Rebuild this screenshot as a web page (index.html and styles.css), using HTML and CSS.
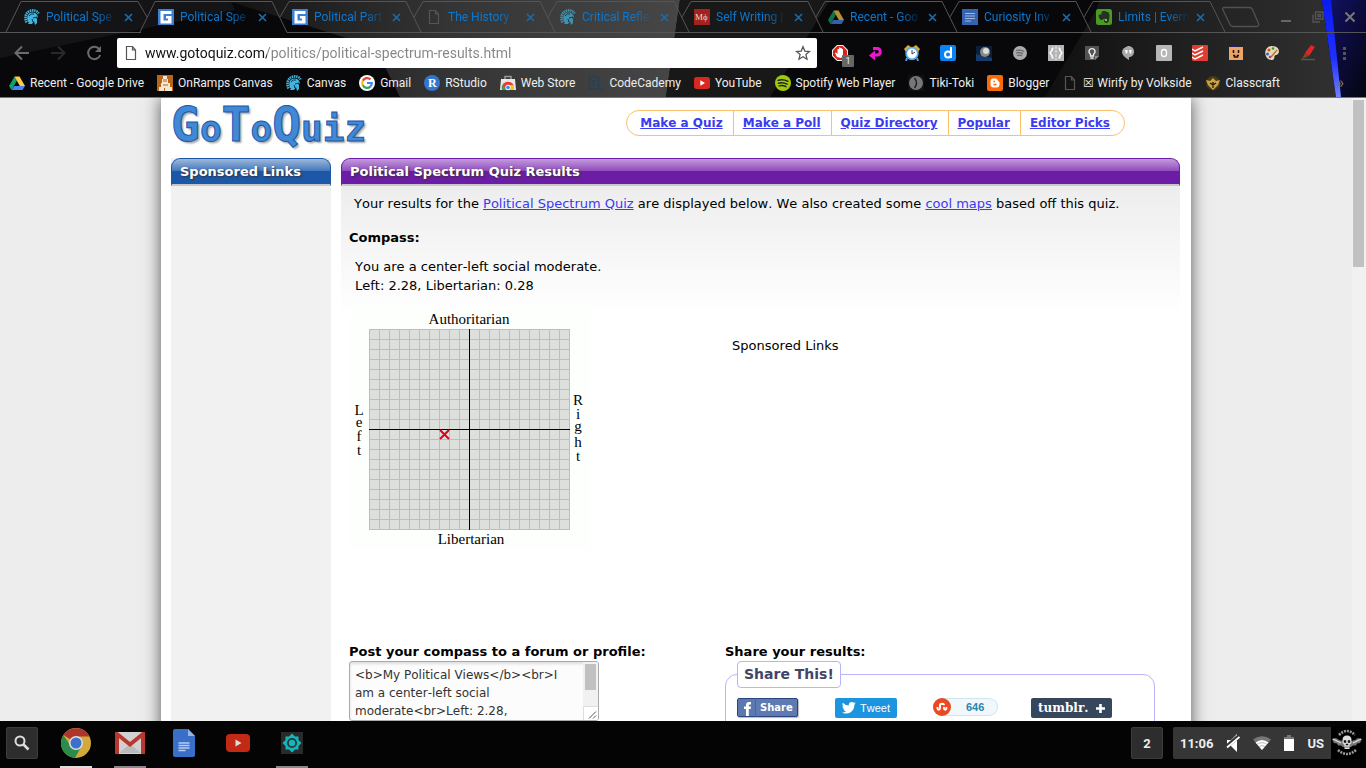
FILE: index.html
```html
<!DOCTYPE html>
<html lang="en">
<head>
<meta charset="utf-8">
<title>Political Spectrum Quiz Results</title>
<link rel="stylesheet" href="styles.css">
</head>
<body>
<svg class="defs" aria-hidden="true">
  <defs>
    <symbol id="spartan" viewBox="0 0 16 16"><path d="M2.500 13.500C.5 9 1.500 3.500 6 2c4-1.500 7.500 0 8.500 2.500" fill="none" stroke="#3fb5e0" stroke-width="2.600" stroke-dasharray="1.500 .7"/><path d="M4 13C2 8 4 3.500 8.500 3.500c3 0 5 1.800 5.500 5l-2.500-.5L13 10v4l-2 2-1-4-2 3H4l1-2z" fill="#3fb5e0"/><path d="M9 9l4-1M8 10l1 3M5 7q2-3 5-2" fill="none" stroke="#123" stroke-width=".9"/></symbol>
    <symbol id="gq" viewBox="0 0 16 16"><path d="M0 0h16v16H0z" fill="#3f7fd0"/><path d="M2.500 2h11v3H5.500v6.500h4.500V9.500H8V7h5.500v7.500h-11z" fill="#fff"/></symbol>
    <symbol id="file" viewBox="0 0 16 16"><path d="M3.500 1.500h6l3 3.500v9.500h-9zM9.500 1.500V5h3" fill="none" stroke="currentColor" stroke-width="1.200"/></symbol>
    <symbol id="mphi" viewBox="0 0 16 16"><path d="M0 0h16v16H0z" fill="#a3221c"/><text x="1" y="11" font-family="Liberation Serif" font-size="9" fill="#ddd">Mϕ</text></symbol>
    <symbol id="drive" viewBox="0 0 16 16"><path d="M5.500 1.500L0 11l2.500 4L8 5.600z" fill="#16a163"/><path d="M5.500 1.500h5L16 11h-5.200z" fill="#fc4"/><path d="M5.200 11H16l-2.500 4h-11z" fill="#4285f4"/></symbol>
    <symbol id="gdoc" viewBox="0 0 16 16"><path d="M0 0h16v16H0z" fill="#3563b0"/><path d="M3 4.500h10M3 7h10M3 9.500h10M3 12h6" stroke="#9db9e8"/></symbol>
    <symbol id="evernote" viewBox="0 0 16 16"><rect width="16" height="16" rx="2.500" fill="#4c9a26"/><path d="M3 6h3V3q2-1 4 0 3 0 3 3 0 7-2 7.500-3 .5-2.500-2.500h2M8 9q-1 2-3 1.500Q3 10 3 6" fill="#273024" stroke="#273024"/><path d="M9 12h2v-2H9z" fill="#7fbf55"/></symbol>
    <symbol id="youtube" viewBox="0 0 24 18"><rect width="24" height="18" rx="4" fill="#d9281e"/><path d="M9.500 5v8l7-4z" fill="#fff"/></symbol>
    <symbol id="spotify" viewBox="0 0 16 16"><circle cx="8" cy="8" r="8" fill="currentColor"/><path d="M3 5.300q5-1.500 10 1M3.500 8.200q4.500-1.200 8.600 1M4 10.900q4-1 7 .8" fill="none" stroke="#222" stroke-width="1.400" stroke-linecap="round"/></symbol>
    <symbol id="cross" viewBox="0 0 9 9"><path d="M1 1l7 7M8 1L1 8" stroke="#1f6a9f" stroke-width="1.700"/></symbol>
  </defs>
</svg>

<header class="browser">
  <svg class="theme" viewBox="0 0 1366 97" preserveAspectRatio="none" aria-hidden="true">
    <defs>
      <linearGradient id="mid"><stop offset="0" stop-color="#121213"/><stop offset=".5" stop-color="#353535"/><stop offset="1" stop-color="#464646"/></linearGradient>
      <linearGradient id="east"><stop offset="0" stop-color="#101010"/><stop offset="1" stop-color="#303030"/></linearGradient>
      <linearGradient id="navy" x2="1" y2="1"><stop offset="0" stop-color="#12126a"/><stop offset="1" stop-color="#05050f"/></linearGradient>
      <linearGradient id="beam" x2="0" y2="1"><stop offset="0" stop-color="#0a1cf0"/><stop offset=".6" stop-color="#1e2fff"/><stop offset="1" stop-color="#7080ff"/></linearGradient>
    </defs>
    <path d="M0 0h1366v97H0z" fill="#08080a"/>
    <path d="M0 0h230l5 10L0 58z" fill="#141416"/>
    <path d="M225 0h455l-14 97H400l-25-50z" fill="url(#mid)"/>
    <path d="M680 0h150l-60 97H666z" fill="#181818"/>
    <path d="M1100 0h222l14 97h-291l50-85z" fill="url(#east)"/>
    <path d="M1322 0h44v97h-30z" fill="url(#navy)"/>
    <path d="M1322 0h9l10 97h-5z" fill="url(#beam)"/>
  </svg>

  <div class="tabrow">
    <ul class="tabs">
      <li class="tab"><svg class="edge" viewBox="0 0 150 33"><path d="M-6 32.500H135M0 32L15 1.500H132L141 17"/></svg><svg class="fav"><use href="#spartan"/></svg><span class="title">Political Spe</span><button class="close" aria-label="Close tab"><svg><use href="#cross"/></svg></button></li>
      <li class="tab active"><svg class="edge" viewBox="0 0 150 33"><path d="M0 32L15 1.500H132L147 32.500"/></svg><svg class="fav"><use href="#gq"/></svg><span class="title">Political Spe</span><button class="close" aria-label="Close tab"><svg><use href="#cross"/></svg></button></li>
      <li class="tab"><svg class="edge" viewBox="0 0 150 33"><path d="M13 32.500H150M6 17L15 1.500H132L147 32"/></svg><svg class="fav"><use href="#gq"/></svg><span class="title">Political Part</span><button class="close" aria-label="Close tab"><svg><use href="#cross"/></svg></button></li>
      <li class="tab"><svg class="edge" viewBox="0 0 150 33"><path d="M0 32.500H150M6 17L15 1.500H132L147 32"/></svg><svg class="fav faint"><use href="#file"/></svg><span class="title">The History</span><button class="close" aria-label="Close tab"><svg><use href="#cross"/></svg></button></li>
      <li class="tab"><svg class="edge" viewBox="0 0 150 33"><path d="M0 32.500H150M6 17L15 1.500H132L147 32"/></svg><svg class="fav dim"><use href="#spartan"/></svg><span class="title">Critical Refle</span><button class="close" aria-label="Close tab"><svg><use href="#cross"/></svg></button></li>
      <li class="tab"><svg class="edge" viewBox="0 0 150 33"><path d="M0 32.500H150M6 17L15 1.500H132L147 32"/></svg><svg class="fav"><use href="#mphi"/></svg><span class="title">Self Writing |</span><button class="close" aria-label="Close tab"><svg><use href="#cross"/></svg></button></li>
      <li class="tab"><svg class="edge" viewBox="0 0 150 33"><path d="M0 32.500H150M6 17L15 1.500H132L147 32"/></svg><svg class="fav dim"><use href="#drive"/></svg><span class="title">Recent - Goo</span><button class="close" aria-label="Close tab"><svg><use href="#cross"/></svg></button></li>
      <li class="tab"><svg class="edge" viewBox="0 0 150 33"><path d="M0 32.500H150M6 17L15 1.500H132L147 32"/></svg><svg class="fav"><use href="#gdoc"/></svg><span class="title">Curiosity Inv</span><button class="close" aria-label="Close tab"><svg><use href="#cross"/></svg></button></li>
      <li class="tab"><svg class="edge" viewBox="0 0 150 33"><path d="M0 32.500H288M6 17L15 1.500H132L147 32"/></svg><svg class="fav"><use href="#evernote"/></svg><span class="title">Limits | Evern</span><button class="close" aria-label="Close tab"><svg><use href="#cross"/></svg></button></li>
    </ul>
    <button class="newtab" aria-label="New tab"><svg width="38" height="22" viewBox="0 0 38 22"><path d="M1.500 1.500h26q2 0 3 2l6 14q1 3-2 3H11q-2 0-3-2L1 4Q0 2 1.500 1.500z" fill="none" stroke="#515151" stroke-width="1.300"/></svg></button>
    <div class="window-buttons">
      <button aria-label="Minimize"><svg width="12" height="12" viewBox="0 0 12 12"><path d="M1 10h10" stroke="#666" stroke-width="2"/></svg></button>
      <button aria-label="Restore"><svg width="12" height="12" viewBox="0 0 12 12"><path d="M3.500 1h7.500v7H3.500zM6 3.500h2.500v2H6zM1 3.500V11h7" fill="none" stroke="#555" stroke-width="1.300"/></svg></button>
      <button aria-label="Close window"><svg width="12" height="12" viewBox="0 0 12 12"><path d="M1.500 1.500l9 9m0-9l-9 9" stroke="#777" stroke-width="2"/></svg></button>
    </div>
  </div>

  <div class="toolbar">
    <div class="history">
      <button aria-label="Back"><svg width="16" height="16" viewBox="0 0 16 16"><path d="M15 8H2M8 1.500L1.500 8 8 14.500" fill="none" stroke="#6c6c6c" stroke-width="2"/></svg></button>
      <button aria-label="Forward"><svg width="16" height="16" viewBox="0 0 16 16"><path d="M1 8h13M8 1.500L14.500 8 8 14.500" fill="none" stroke="#29292b" stroke-width="2"/></svg></button>
      <button aria-label="Reload"><svg width="16" height="16" viewBox="0 0 16 16"><path d="M13.500 4.500A6.200 6.200 0 1 0 14.200 10" fill="none" stroke="#6c6c6c" stroke-width="2"/><path d="M15 1v6H9z" fill="#6c6c6c"/></svg></button>
    </div>
    <form class="omnibox">
      <svg class="fav sheet"><use href="#file"/></svg>
      <input class="url" type="text" aria-label="Address" value="www.gotoquiz.com/politics/political-spectrum-results.html">
      <button type="button" aria-label="Bookmark"><svg width="16" height="16" viewBox="0 0 16 16"><path d="M8 1.800l1.800 4.300 4.700.4-3.600 3.100 1.100 4.600L8 11.700l-4 2.500 1.100-4.600L1.500 6.500l4.700-.4z" fill="none" stroke="#555" stroke-width="1.300"/></svg></button>
    </form>
    <div class="extensions">
      <button aria-label="AdBlock, 1 blocked"><svg viewBox="0 0 16 16"><path d="M5 0h6l5 5v6l-5 5H5l-5-5V5z" fill="#eee"/><path d="M5.400 1h5.200L15 5.400v5.200L10.600 15H5.400L1 10.600V5.400z" fill="#d8221c"/><path d="M5 12L3 8l1-.5L5.500 9V4H7V2.500h1.300V3h1.400v1H11v5q0 3-2 4z" fill="#fff"/></svg><span class="badge">1</span></button>
      <button aria-label="Return"><svg viewBox="0 0 16 16"><path d="M5 3.500h4.500a3.300 3.300 0 0 1 0 6.500H5" fill="none" stroke="#f016d0" stroke-width="3"/><path d="M1 10.500l6-5v10z" fill="#f016d0"/></svg></button>
      <button aria-label="Alarm"><svg viewBox="0 0 16 16"><path d="M0 4l4-4 3 2-5 5zM16 4l-4-4-3 2 5 5z" fill="#e2a936"/><path d="M3 13l-1 3M13 13l1 3" stroke="#5a9bd6" stroke-width="2"/><circle cx="8" cy="8.500" r="5.800" fill="#fff" stroke="#5faae4" stroke-width="1.800"/><path d="M8 5v4l3-2" fill="none" stroke="#246"/></svg></button>
      <button aria-label="Diigo"><svg viewBox="0 0 16 16"><rect width="16" height="16" rx="2" fill="#0a84f5"/><path d="M11 2v11" stroke="#fff" stroke-width="2"/><circle cx="8" cy="9.500" r="3" fill="none" stroke="#fff" stroke-width="2"/></svg></button>
      <button aria-label="Moon"><svg viewBox="0 0 16 16"><path d="M0 1h16v15H0z" fill="#0b2038"/><path d="M0 9q8 2 16 4v3H0z" fill="#173c6a"/><circle cx="9" cy="7" r="5" fill="#888"/><circle cx="10" cy="6" r="3" fill="#ddd"/></svg></button>
      <button aria-label="Spotify"><svg viewBox="0 0 16 16"><circle cx="8" cy="8" r="7" fill="#aaa"/><path d="M4 5.500q4-1 8 1M4 8q4-1 7 1M5 10.500q3-1 5 .5" fill="none" stroke="#666" stroke-width="1.200"/></svg></button>
      <button aria-label="Code"><svg viewBox="0 0 16 16"><path d="M0 0h16v16H0z" fill="#b4b4b4"/><path d="M5.500 3Q4 3 4 5.500L2 8l2 2.500Q4 13 5.500 13M10.500 3Q12 3 12 5.500L14 8l-2 2.500q0 2.500-1.500 2.500" fill="none" stroke="#fff" stroke-width="1.500"/><path d="M8 1v14" stroke="#eee" stroke-dasharray="3 1"/></svg></button>
      <button aria-label="Keep"><svg viewBox="0 0 16 16"><path d="M1 1h14v10l-4 4H1z" fill="#535353"/><path d="M11 15v-4h4z" fill="#888"/><path d="M6.500 9.500Q4 7 5.500 4.800q2.500-2.400 5 0Q12 7 9.500 9.500v1.500h-3zM6.500 13h3" fill="none" stroke="#eee" stroke-width="1.300"/></svg></button>
      <button aria-label="Hangouts"><svg viewBox="0 0 16 16"><path d="M8 1c8 0 8 11 1 11v3Q2 11 2 7t6-6z" fill="#a9a9a9"/><path d="M5 5h2.500v2.500L6 9M9 5h2.500v2.500L10 9" fill="#fff"/></svg></button>
      <button aria-label="Office"><svg viewBox="0 0 16 16"><rect width="16" height="16" rx="1" fill="#b7b7b7"/><rect x="5.500" y="4.500" width="5" height="7" rx="2.500" fill="none" stroke="#fff" stroke-width="1.300"/></svg></button>
      <button aria-label="Todoist"><svg viewBox="0 0 16 16"><rect width="16" height="16" rx="1" fill="#df3d30"/><path d="M0 4l3 2 8-4M0 8l3 2 8-4M0 12l3 2 8-4" fill="none" stroke="#fff" stroke-width="1.500"/></svg></button>
      <button aria-label="Face"><svg viewBox="0 0 16 16"><path d="M1 2h14v13H1z" fill="#eca469"/><path d="M4 1h5v1H4z" fill="#24246d"/><path d="M5.500 5v3M10.500 5v3M5 10.500h1.500v1.500h3v-1.500H11" fill="none" stroke="#211" stroke-width="1.500"/></svg></button>
      <button aria-label="Palette"><svg viewBox="0 0 16 16"><path d="M8 1c9 0 8 9 4 9-3 0 0 5-4 5C-1 15-1 1 8 1z" fill="#e6d9bb"/><circle cx="5" cy="5" r="1.500" fill="#cc5127"/><circle cx="9" cy="3.500" r="1.300" fill="#4c8b32"/><circle cx="3.500" cy="9" r="1.500" fill="#3267c5"/><circle cx="6" cy="12" r="1.300" fill="#ad3b88"/><path d="M7 12L13 5" stroke="#b4702c" stroke-width="1.300"/></svg></button>
      <button aria-label="Highlighter"><svg viewBox="0 0 16 16"><path d="M1 14.500h14" stroke="#555" stroke-width="1.500"/><path d="M5 8l6-8 4 2-6 9z" fill="#df2525"/><path d="M5 8l4 3-5 2-2 1z" fill="#842"/></svg></button>
      <button aria-label="Menu"><svg viewBox="0 0 16 16"><path d="M7 2h3v3H7zM7 7h3v3H7zM7 12h3v3H7z" fill="#555"/></svg></button>
    </div>
  </div>

  <nav class="bookmarks" aria-label="Bookmarks">
    <a href="#"><svg class="fav"><use href="#drive"/></svg>Recent - Google Drive</a>
    <a href="#"><svg class="fav" viewBox="0 0 16 16"><path d="M0 0h16v16H0z" fill="#b8651b"/><path d="M6 1h4v3h1v4h2v4h2v4H2v-4h2V8h1V4h1z" fill="#f3e7d3"/><path d="M7 4v3M9 4v3M6 10h5M7.500 13v3" stroke="#b8651b"/></svg>OnRamps Canvas</a>
    <a href="#"><svg class="fav"><use href="#spartan"/></svg>Canvas</a>
    <a href="#"><svg class="fav" viewBox="0 0 16 16"><circle cx="8" cy="8" r="8" fill="#fff"/><g fill="none" stroke-width="2.200"><path d="M11.500 4.500A4.800 4.800 0 0 0 3.800 5.700" stroke="#ea4335"/><path d="M3.800 5.700a4.800 4.800 0 0 0 0 4.600" stroke="#fbbc05"/><path d="M3.800 10.300a4.800 4.800 0 0 0 7.500 1.300" stroke="#34a853"/><path d="M11.300 11.600A4.800 4.800 0 0 0 12.800 8H8" stroke="#4285f4"/></g></svg>Gmail</a>
    <a href="#"><svg class="fav" viewBox="0 0 16 16"><circle cx="8" cy="8" r="8" fill="#3376cf"/><text x="4" y="12" font-family="Liberation Serif" font-size="12" font-weight="700" fill="#fff">R</text></svg>RStudio</a>
    <a href="#"><svg class="fav" viewBox="0 0 16 16"><path d="M1 4h14l1 11H0z" fill="#e9e9e9"/><path d="M5 4V1.500h6V4" fill="none" stroke="#999" stroke-width="1.500"/><path d="M2 15a6 6 0 0 1 12-4z" fill="#dc4535"/><path d="M2.500 10l4 5H2z" fill="#31a753"/><path d="M9 10h5v5H8z" fill="#fbc116"/><circle cx="8" cy="12.500" r="2.300" fill="#4285f4" stroke="#fff"/></svg>Web Store</a>
    <a href="#"><svg class="fav" viewBox="0 0 16 16"><path d="M1.500 2h9v12h-9zM8 6H5v4h3M12 14.500h4" fill="none" stroke="#204259" stroke-width="1.400"/></svg>CodeCademy</a>
    <a href="#"><svg class="fav"><use href="#youtube"/></svg>YouTube</a>
    <a href="#"><svg class="fav lime"><use href="#spotify"/></svg>Spotify Web Player</a>
    <a href="#"><svg class="fav" viewBox="0 0 16 16"><path d="M0 0h16v16H0z" fill="#111"/><circle cx="8" cy="8" r="7" fill="#777"/><path d="M6.500 3q4 5 0 10" fill="none" stroke="#222" stroke-width="1.500"/></svg>Tiki-Toki</a>
    <a href="#"><svg class="fav" viewBox="0 0 16 16"><rect width="16" height="16" rx="2" fill="#f96a0a"/><path d="M6 4h2.500q2 0 2 2 0 1 1.500 1v3q0 2-2 2H6q-2 0-2-2V6q0-2 2-2z" fill="#fff" stroke="#fff"/><path d="M6.500 6.500H8M6.500 9.500h3" stroke="#f96a0a" stroke-width="1.300"/></svg>Blogger</a>
    <a href="#"><svg class="fav faint"><use href="#file"/></svg>☒ Wirify by Volkside</a>
    <a href="#"><svg class="fav" viewBox="0 0 16 16"><circle cx="8" cy="8" r="7" fill="#4a3a18"/><path d="M1 5l4 1 3-3 3 3 4-1-2 5-5 5-5-5z" fill="#cca344"/><path d="M8 7v6M5 8l3 2 3-2" fill="none" stroke="#221a0b" stroke-width="1.300"/></svg>Classcraft</a>
    <button class="more" aria-label="More bookmarks">»</button>
  </nav>
</header>

<div class="viewport">
  <div class="canvas">
    <div class="page">
      <div class="masthead">
        <a class="logo" href="#" aria-label="GoToQuiz"><b>G</b>o<b>T</b>o<b>Q</b>uiz</a>
        <nav class="pills"><a href="#">Make a Quiz</a><a href="#">Make a Poll</a><a href="#">Quiz Directory</a><a href="#">Popular</a><a href="#">Editor Picks</a></nav>
      </div>
      <div class="columns">
        <aside class="side"><h2 class="bar blue">Sponsored Links</h2></aside>
        <main class="main">
          <h1 class="bar purple">Political Spectrum Quiz Results</h1>
          <div class="content">
            <p class="intro">Your results for the <a href="#">Political Spectrum Quiz</a> are displayed below. We also created some <a href="#">cool maps</a> based off this quiz.</p>
            <h3>Compass:</h3>
            <p class="result">You are a center-left social moderate.<br>Left: 2.28, Libertarian: 0.28</p>
            <div class="halves chart-row">
              <svg class="compass" viewBox="0 0 240 240" role="img" aria-label="Political compass">
                <defs><pattern id="cells" x="19" y="19" width="10" height="10" patternUnits="userSpaceOnUse"><path d="M0 .5H10M.5 0V10" stroke="#bbbebb"/></pattern></defs>
                <path d="M0 0h240v240H0z" fill="#fcfffc"/>
                <path d="M19 19h201v201H19z" fill="#dcdfdc"/>
                <path d="M19 19h201v201H19z" fill="url(#cells)"/>
                <path d="M119.500 19v201M19 119.500h201" stroke="#000"/>
                <path d="M90 120l9 9m0-9l-9 9" stroke="#e2001a" stroke-width="2"/>
                <g class="axis"><text x="119" y="14">Authoritarian</text><text x="121" y="234">Libertarian</text>
                <text x="9" y="105">L</text><text x="9" y="117">e</text><text x="9" y="131">f</text><text x="9" y="145">t</text>
                <text x="228" y="95">R</text><text x="228" y="109">i</text><text x="228" y="121">g</text><text x="228" y="137">h</text><text x="228" y="151">t</text></g>
              </svg>
              <p class="sponsor">Sponsored Links</p>
            </div>
            <div class="halves">
              <section>
                <h3><label for="embed">Post your compass to a forum or profile:</label></h3>
                <div class="embed-box">
                  <textarea id="embed" class="embed">&lt;b&gt;My Political Views&lt;/b&gt;&lt;br&gt;I am a center-left social moderate&lt;br&gt;Left: 2.28,</textarea>
                  <div class="embed-side" aria-hidden="true"><div class="embed-thumb"></div><svg width="15" height="14" viewBox="0 0 15 14"><path d="M0 0h15v14H0z" fill="#fff"/><path d="M0 .5h15M.5 0v14" stroke="#ddd"/><path d="M6 12.500l7-7M10 12.500l3-3" stroke="#555"/></svg></div>
                </div>
              </section>
              <section>
                <h3>Share your results:</h3>
                <fieldset class="share">
                  <legend>Share This!</legend>
                  <div class="share-buttons">
                    <button class="fb"><svg width="17" height="17" viewBox="0 0 17 17"><path d="M0 0h17v17H0z" fill="#5b78b1"/><path d="M8 17V10H6V7.500h2V6q0-3 3-3h2v2.500h-1.500q-.7 0-.7 1v1H13l-.3 2.500h-1.900v7z" fill="#fff"/></svg><span>Share</span></button>
                    <button class="tw"><svg width="14" height="12" viewBox="0 0 14 12"><path d="M0 10.400q2.400.2 4-1.200-2-.2-2.600-2h1.200Q.5 6.500.4 4.200l1.200.4Q-.4 2.800.9.700 3.400 3.500 6.800 3.600 6.500.3 9.600 0q1.200 0 2 .8L13.400.2l-1.100 1.500 1.600-.4-1.500 1.500Q12.300 7.600 9 10 4.500 13 0 10.400z" fill="#fff"/></svg>Tweet</button>
                    <button class="su"><svg width="18" height="18" viewBox="0 0 18 18"><circle cx="9" cy="9" r="9" fill="#eb4823"/><path d="M4.500 9v1.500q0 1.200 1.200 1.200T7 10.500V7.300Q7 5.800 9 5.800t2 1.500M11 9v1.500q0 1.200 1.200 1.200t1.200-1.200V9" fill="none" stroke="#fff" stroke-width="1.900"/></svg><span>646</span></button>
                    <button class="tu"><span>tumblr.</span><svg width="9" height="9" viewBox="0 0 9 9"><path d="M4.500 0v9M0 4.500h9" stroke="#fff" stroke-width="2.600"/></svg></button>
                  </div>
                </fieldset>
              </section>
            </div>
          </div>
        </main>
      </div>
    </div>
  </div>
  <div class="scrollbar" aria-hidden="true"><div class="thumb"></div></div>
</div>

<footer class="shelf">
  <button class="tile search" aria-label="Search"><svg width="16" height="16" viewBox="0 0 16 16"><circle cx="6" cy="6" r="4.500" fill="none" stroke="#ddd" stroke-width="2"/><path d="M9 9l5.500 5.500" stroke="#ddd" stroke-width="2.600"/></svg></button>
  <div class="apps">
    <button class="app current" aria-label="Chrome"><svg width="30" height="30" viewBox="0 0 30 30"><circle cx="15" cy="15" r="15" fill="#d2aa3c"/><path d="M15 15L2.500 7A15 15 0 0 1 28.500 8.500H15z" fill="#ae352d"/><path d="M2.300 7A15 15 0 0 0 14 30l6.500-12L15 15 9 17z" fill="#2b8b4a"/><circle cx="15" cy="15" r="7" fill="#ddd"/><circle cx="15" cy="15" r="5.500" fill="#3c70cc"/></svg></button>
    <button class="app open" aria-label="Gmail"><svg width="30" height="22" viewBox="0 0 30 22"><rect width="30" height="22" rx="2" fill="#d1d1d1"/><path d="M4 21l11-9 11 9z" fill="#bbb"/><path d="M2 22V2l13 10.500L28 2v20" fill="none" stroke="#b8382f" stroke-width="4"/></svg></button>
    <button class="app" aria-label="Docs"><svg width="22" height="28" viewBox="0 0 22 28"><path d="M2 0h13l7 7v19q0 2-2 2H2q-2 0-2-2V2q0-2 2-2z" fill="#3a6fc9"/><path d="M15 0l7 7h-7z" fill="#95b4ea"/><path d="M5.500 14h11M5.500 16.500h11M5.500 19h11M5.500 21.500h7" stroke="#b9cbee" stroke-width="1.300"/></svg></button>
    <button class="app" aria-label="YouTube"><svg width="24" height="18" viewBox="0 0 24 18"><rect width="24" height="18" rx="4" fill="#c22a16"/><path d="M9.500 5.500v7l6-3.500z" fill="#ddd"/></svg></button>
    <button class="app open" aria-label="Settings"><svg width="22" height="22" viewBox="0 0 22 22"><path d="M0 0h22v22H0z" fill="#2a2a2a"/><path d="M11 1.500l3 3h3.500V8l3 3-3 3v3.500H14l-3 3-3-3H4.500V14l-3-3 3-3V4.500H8z" fill="#14b6b9"/><circle cx="11" cy="11" r="5" fill="#24383b"/><circle cx="11" cy="11" r="3.200" fill="#14b6b9"/></svg></button>
  </div>
  <div class="status">
    <button class="tile count">2</button>
    <button class="tray"><span>11:06</span>
      <svg width="14" height="18" viewBox="0 0 14 18"><path d="M1 6h4l6-6v18l-6-6H1z" fill="#fff"/><path d="M0 13L13 2" stroke="#363636" stroke-width="4"/><path d="M1 13.500L13.500 3" stroke="#fff" stroke-width="1.800"/></svg>
      <svg width="18" height="14" viewBox="0 0 18 14"><path d="M0 3.500Q9-3 18 3.500L9 14z" fill="#777"/><path d="M2.500 6.500Q9 1.500 15.500 6.500L9 14z" fill="#fff"/><path d="M4.300 8.300Q9 5 13.700 8.300M6 10.500q3-2 6 0" fill="none" stroke="#999" stroke-width=".7"/></svg>
      <svg width="10" height="16" viewBox="0 0 10 16"><path d="M3 0h4v2h3v3H0V2h3z" fill="#777"/><path d="M0 4h10v12H0z" fill="#fff"/></svg>
      <span>US</span></button>
    <button class="avatar" aria-label="Account"><svg width="32" height="32" viewBox="0 0 32 32"><path d="M0 0h32v32H0z" fill="#000"/><path d="M8 8Q16 0 24 8M7 23q9 8 18 0" fill="none" stroke="#999" stroke-width="2.600" stroke-dasharray="2 1"/><path d="M1 12l4-1 3 2 4 1h8l4-1 3-2 4 1-2 4-3 .5-1 2-3 0-2 1.500-8 0-2-1.500-3 0-1-2-3-.5z" fill="#777"/><path d="M2 12l8 4M30 12l-8 4" stroke="#ddd" stroke-width="1.300"/><path d="M11.500 13q0-4.500 4.500-4.500t4.500 4.500v3l-2 2v4h-5v-4l-2-2z" fill="#ddd"/><path d="M13 13.500h2v2h-2zM17 13.500h2v2h-2zM15 17h2v1h-2zM14 20h4" fill="#111" stroke="#111" stroke-width=".5"/></svg></button>
  </div>
</footer>
</body>
</html>
```
FILE: styles.css
```css
* { box-sizing: border-box; }
body {
  margin: 0;
  height: 100vh;
  display: flex;
  flex-direction: column;
  overflow: hidden;
  font-family: "DejaVu Sans", Verdana, sans-serif;
  font-size: 13px;
  line-height: 19px;
  color: #000;
}
button { padding: 0; border: 0; background: none; font: inherit; color: inherit; }
h1, h2, h3, p, ul { margin: 0; padding: 0; }
svg { display: block; flex: none; }
.defs { position: absolute; width: 0; height: 0; }
.fav { width: 16px; height: 16px; }
.faint { color: #555; }
.dim { opacity: .7; }
.lime { color: #9fc90a; }
.sheet { color: #555; }

/* Browser frame */
.browser {
  position: relative;
  flex: none;
  font-family: Roboto, sans-serif;
  font-size: 12px;
  line-height: 16px;
  color: #eee;
  border-bottom: 1px solid #777;
}
.theme { position: absolute; inset: 0; width: 100%; height: 100%; z-index: -1; }
.tabrow { height: 33px; display: flex; align-items: center; padding-left: 6px; }
.tabs { display: flex; list-style: none; height: 33px; }
.tab {
  position: relative;
  width: 134px;
  display: flex;
  align-items: center;
  gap: 6px;
  padding: 1px 7px 0 18px;
}
.edge { position: absolute; left: 0; top: 0; width: 150px; height: 33px; overflow: visible; pointer-events: none; }
.edge path { fill: none; stroke: #555; stroke-width: 1; }
.title {
  flex: 1;
  white-space: nowrap;
  color: #0b78d0;
  -webkit-mask-image: linear-gradient(90deg, #000 70%, transparent);
  mask-image: linear-gradient(90deg, #000 70%, transparent);
}
.close svg { width: 9px; height: 9px; }
.newtab { margin-left: 10px; }
.window-buttons { display: flex; gap: 20px; margin-left: auto; padding-right: 10px; }
.toolbar { height: 39px; display: flex; align-items: center; }
.history { flex: none; width: 117px; display: flex; gap: 20px; padding-left: 14px; }
.omnibox {
  flex: 1;
  height: 30px;
  display: flex;
  align-items: center;
  gap: 6px;
  margin: 0;
  padding: 0 6px;
  background: #fff;
  border-radius: 2px;
}
.url {
  flex: 1;
  min-width: 0;
  border: 0;
  padding: 0;
  font-family: Roboto, sans-serif;
  font-size: 14px;
  color: transparent;
  background: linear-gradient(90deg, #111 122px, #858585 122px);
  -webkit-background-clip: text;
  background-clip: text;
}
.extensions { flex: none; display: flex; gap: 20px; padding: 0 14px 0 15px; }
.extensions button { position: relative; width: 16px; height: 16px; }
.extensions svg { width: 16px; height: 16px; }
.badge {
  position: absolute;
  left: 10px;
  top: 10px;
  width: 12px;
  height: 12px;
  background: #666;
  border-radius: 1px;
  font-size: 9px;
  line-height: 12px;
}
.bookmarks { height: 25px; display: flex; align-items: center; gap: 13px; padding: 0 22px 3px 9px; }
.bookmarks a { display: flex; align-items: center; gap: 5px; white-space: nowrap; color: #eee; text-decoration: none; }
.more { margin-left: auto; color: #777; font-size: 16px; }

/* Web page */
.viewport { flex: 1; min-height: 0; display: flex; overflow: hidden; background: #ededed; }
.canvas { flex: 1; overflow: hidden; }
.page {
  max-width: 1030px;
  min-height: 100%;
  margin: 0 auto;
  padding: 0 11px 0 10px;
  display: flex;
  flex-direction: column;
  background: #fff;
  box-shadow: 0 0 16px #555;
  font-kerning: none;
}
.scrollbar { flex: none; width: 14px; padding: 2px 2px 0 1px; background: #f1f1f1; }
.thumb { height: 167px; background: #c1c1c1; }
.masthead { height: 60px; display: flex; justify-content: space-between; align-items: flex-start; padding-right: 55px; }
.logo {
  font-family: "DejaVu Sans Mono", monospace;
  font-size: 36px;
  font-weight: 700;
  line-height: 52px;
  text-decoration: none;
  color: #4189d6;
  -webkit-text-stroke: 1px #1c57a8;
  text-shadow: 2px 2px 2px #aaa;
}
.logo b { font-size: 48px; }
.pills { display: flex; margin-top: 12px; padding: 0 4px 0 0; border: 1px solid #fbc06c; border-radius: 13px; }
.pills a { padding: 0 10px; font-size: 12px; font-weight: 700; line-height: 24px; }
.pills a:first-child { padding-left: 13px; }
.pills a + a { padding-left: 9px; border-left: 1px solid #fbc06c; }
a { color: #3a3af0; }
.columns { flex: 1; display: flex; gap: 10px; }
.side { flex: none; width: 160px; background: #f1f1f1; }
.main { flex: 1; min-width: 0; }
.bar {
  height: 28px;
  padding-left: 8px;
  border: 1px solid;
  border-bottom: 2px solid #c8c8c8;
  border-radius: 9px 9px 0 0;
  font-size: 13px;
  line-height: 25px;
  color: #fff;
  text-shadow: 1px 1px 2px #333;
}
.blue { border-color: #1c57a8 #1c57a8 #c8c8c8; background: linear-gradient(#9db8dc, #4277ba 12px, #1c57a8 12px); }
.purple { border-color: #6d1ca5 #6d1ca5 #c8c8c8; background: linear-gradient(#c39bdc, #8f4bbc 12px, #6d1ca5 12px); }
.content { padding: 8px 25px 0 8px; background: linear-gradient(#ededed, #fff 128px); }
.intro { padding-left: 5px; margin-bottom: 15px; }
h3 { font-size: 13px; line-height: 19px; }
.result { padding-left: 6px; margin-top: 10px; }
.halves { display: grid; grid-template-columns: 376px 1fr; }
.chart-row { margin-top: 15px; min-height: 332px; align-items: start; }
.compass { width: 240px; height: 240px; margin-left: 1px; }
.axis { font-family: "Liberation Serif", serif; font-size: 15px; text-anchor: middle; }
.sponsor { margin-top: 26px; padding-left: 7px; }
.embed-box {
  display: flex;
  width: 250px;
  height: 60px;
  border: 1px solid #aaa;
  border-radius: 3px;
  background: #fcfcfc;
  box-shadow: inset 0 2px 3px #ddd;
  overflow: hidden;
}
.embed {
  flex: 1;
  min-width: 0;
  margin: 0;
  padding: 4px 20px 0 5px;
  border: 0;
  background: none;
  font-family: "DejaVu Sans", sans-serif;
  font-size: 12px;
  font-kerning: none;
  line-height: 18px;
  color: #333;
  resize: none;
  overflow: hidden;
}
.embed-side { flex: none; width: 15px; display: flex; flex-direction: column; justify-content: space-between; background: #f1f1f1; }
.embed-thumb { height: 26px; margin: 2px 2px 0; background: #c1c1c1; }
.share { margin: 0; padding: 10px 11px 40px; border: 1px solid #b9b3fa; border-radius: 12px; }
.share legend { padding: 3px 6px; border: 1px solid #b9b3fa; border-radius: 4px; font-size: 14px; font-weight: 700; color: #444466; }
.share-buttons { display: grid; grid-template-columns: repeat(4, 98px); align-items: start; justify-items: start; }
.share-buttons button { display: flex; align-items: center; height: 20px; border-radius: 2px; }
.share-buttons .fb { height: 19px; border: 1px solid #29447e; background: #5f7ab0; color: #fff; font-size: 10px; font-weight: 700; box-shadow: 1px 1px 1px #bbb; }
.fb span { padding: 0 4px; border-left: 1px solid #4a659c; }
.share-buttons .tw { gap: 4px; padding: 0 7px; background: #1b95e0; color: #fff; font-family: "Liberation Sans", sans-serif; font-size: 11px; }
.share-buttons .su { height: 18px; border-radius: 9px; background: #f0f8fd; box-shadow: inset 0 0 0 1px #cfe6ef; color: #2a87ad; font-family: "Liberation Sans", sans-serif; font-size: 11px; font-weight: 700; }
.su span { padding: 0 14px 0 15px; }
.share-buttons .tu { gap: 8px; padding: 0 7px; background: #36465d; color: #fff; font-family: "DejaVu Serif", serif; font-size: 12px; font-weight: 700; }

/* Shelf */
.shelf {
  flex: none;
  height: 47px;
  display: flex;
  align-items: flex-start;
  background: #040404;
  font-family: Roboto, sans-serif;
  font-size: 14px;
  font-weight: 500;
  color: #eee;
}
.tile { width: 32px; height: 32px; display: grid; place-items: center; background: #2d2d2d; border: 1px solid #3c3c3c; border-radius: 2px; }
.search { margin: 6px 0 0 6px; }
.count { font-size: 13px; font-weight: 700; }
.apps { display: flex; gap: 22px; margin-left: 22px; }
.app { width: 32px; height: 47px; display: grid; place-items: center; padding-bottom: 1px; border-bottom: 2px solid transparent; }
.current { border-color: #ddd; }
.open { border-color: #888; }
.status { display: flex; margin: 6px 3px 0 auto; }
.tray { display: flex; align-items: center; gap: 13px; height: 32px; margin-left: 10px; padding: 0 7px; background: #363636; border-radius: 2px 0 0 2px; }
.tray span { font-weight: 700; font-size: 13px; }
```
